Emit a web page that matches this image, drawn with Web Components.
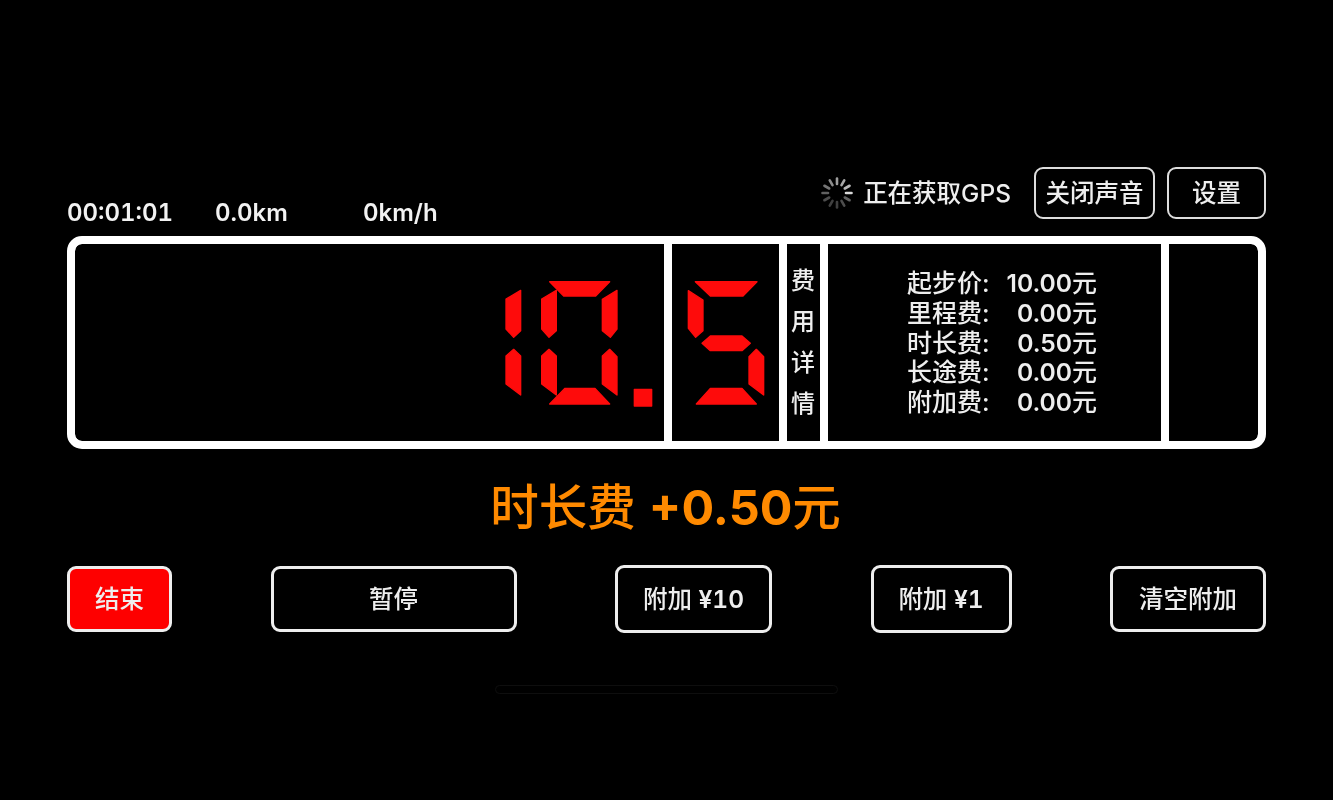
<!DOCTYPE html>
<html lang="zh">
<head>
<meta charset="utf-8">
<title>计价器</title>
<style>
  html, body { margin: 0; background: #000; }
  body { font-family: Inter, "Noto Sans CJK SC", sans-serif; color: #fff; }
</style>
</head>
<body>
<meter-app></meter-app>

<script>
class MeterButton extends HTMLElement {
  constructor() {
    super();
    this.attachShadow({ mode: 'open' });
    this.shadowRoot.innerHTML = `
      <style>
        :host {
          display: flex; align-items: center; justify-content: center;
          box-sizing: border-box; height: 66px; padding-bottom: 4px;
          border: 3px solid #eee; border-radius: 9px;
          font: 500 24.5px Inter, "Noto Sans CJK SC", sans-serif; color: #eee;
          font-variant-numeric: tabular-nums; white-space: pre;
          background: #000;
        }
        :host([danger]) { background: #fe0000; }
      </style>
      <slot></slot>`;
  }
}
customElements.define('meter-button', MeterButton);

class GpsStatus extends HTMLElement {
  constructor() {
    super();
    this.attachShadow({ mode: 'open' });
    // brightest spoke at three o'clock, fading clockwise round to four o'clock
    const shades = [0.62, 0.66, 0.72, 0.85, 0.38, 0.3, 0.25, 0.25, 0.3, 0.38, 0.46, 0.55];
    const spokes = shades.map((op, i) => `<line x1="16" y1="1.5" x2="16" y2="7" stroke="#fff" stroke-width="2.6"
        stroke-linecap="round" opacity="${op}" transform="rotate(${i * 30} 16 16)"/>`).join('');
    this.shadowRoot.innerHTML = `
      <style>
        :host { display: flex; align-items: center; gap: 10px; margin-right: 11px; padding-bottom: 4px;
          font: 500 24.5px Inter, "Noto Sans CJK SC", sans-serif; color: #eee; }
        svg { display: block; margin-top: 4px; }
      </style>
      <svg width="32" height="32" viewBox="0 0 32 32">${spokes}</svg>
      <slot></slot>`;
  }
}
customElements.define('gps-status', GpsStatus);

class TripStats extends HTMLElement {
  constructor() {
    super();
    this.attachShadow({ mode: 'open' });
    this.shadowRoot.innerHTML = `
      <style>
        :host {
          display: grid; grid-template-columns: 148px 148px auto;
          font: 600 24px Inter, "Noto Sans CJK SC", sans-serif; color: #f2f2f2;
          font-variant-numeric: tabular-nums;
          line-height: 26px; margin-bottom: -7px;
        }
      </style>
      <slot></slot>`;
  }
}
customElements.define('trip-stats', TripStats);

class SegDisplay extends HTMLElement {
  static get shapes() {
    return {
      // all points are in a 3x grid of the display area
      one: '93,91 93,212 72,232 49,207 49,117|49,288 72,268 93,288 93,405 49,372',
      zero: '200,91 200,212 178,232 156,207 156,117|156,288 178,268 200,288 200,405 156,372|'
        + '180,65 360,65 318,108 222,108|338,118 382,91 382,207 362,232 338,212|'
        + '338,288 360,268 382,290 382,405 338,372|180,432 360,432 316,385 226,385',
      dot: '434,388 486,388 486,438 434,438',
      five: '615,65 800,65 758,108 660,108|594,92 638,120 638,212 616,232 594,205|'
        + '635,250 660,228 755,228 780,250 755,272 660,272|776,290 798,268 820,290 820,405 776,372|'
        + '618,432 798,432 755,385 660,385'
    };
  }

  connectedCallback() {
    const root = this.shadowRoot || this.attachShadow({ mode: 'open' });
    const names = this.getAttribute('glyphs').split(' ');
    const [x, w] = this.getAttribute('span').split(' ').map(Number);
    const polys = names.map(n => SegDisplay.shapes[n]).join('|').split('|')
      .map(p => `<polygon points="${p}"/>`).join('');
    root.innerHTML = `
      <style>
        :host { display: block; margin-bottom: 5px; }
        svg { display: block; fill: #fe0b0b; stroke: #fe0b0b; stroke-width: 4; stroke-linejoin: round; overflow: visible; }
      </style>
      <svg width="${w / 3}" height="160" viewBox="${x} 0 ${w} 480">${polys}</svg>`;
  }
}
customElements.define('seg-display', SegDisplay);

class FeeDetail extends HTMLElement {
  set items(rows) {
    this.shadowRoot.querySelector('.grid').innerHTML = rows.map(([label, value]) => `
      <span class="label">${label}:</span><span class="value"><b>${value}</b>元</span>`).join('');
  }

  constructor() {
    super();
    this.attachShadow({ mode: 'open' });
    this.shadowRoot.innerHTML = `
      <style>
        :host { display: flex; align-items: center; justify-content: center; color: #eee; }
        .grid {
          display: grid; grid-template-columns: auto auto; column-gap: 17px;
          font: 500 25px/29.9px Inter, "Noto Sans CJK SC", sans-serif;
          margin: 2px 0 0 15px;
        }
        .value { text-align: right; }
        b { font-weight: 600; font-size: 24.6px; }
      </style>
      <div class="grid"></div>`;
  }
}
customElements.define('fee-detail', FeeDetail);

class FarePanel extends HTMLElement {
  constructor() {
    super();
    this.attachShadow({ mode: 'open' });
    this.shadowRoot.innerHTML = `
      <style>
        :host {
          display: grid; grid-template-columns: 589px 107px 33px 333px 89px; column-gap: 8px;
          box-sizing: border-box; height: 213px;
          border: 8px solid #fff; border-radius: 15px;
          background: #fff; overflow: hidden;
        }
        .cell { background: #000; display: flex; align-items: center; min-width: 0; }
        .int { justify-content: flex-end; padding-right: 11px; border-radius: 7px 0 0 7px; }
        .frac { justify-content: center; }
        .vlabel {
          flex-direction: column; justify-content: center; gap: 17px; padding-right: 1px; box-sizing: border-box;
          font: 500 24px/24px Inter, "Noto Sans CJK SC", sans-serif; color: #eee;
        }
        .detail { display: block; }
        .end { border-radius: 0 7px 7px 0; }
        ::slotted(fee-detail) { height: 100%; }
      </style>
      <div class="cell int"><slot name="int"></slot></div>
      <div class="cell frac"><slot name="frac"></slot></div>
      <div class="cell vlabel"><span>费</span><span>用</span><span>详</span><span>情</span></div>
      <div class="cell detail"><slot name="detail"></slot></div>
      <div class="cell end"></div>`;
  }
}
customElements.define('fare-panel', FarePanel);

class MeterApp extends HTMLElement {
  constructor() {
    super();
    this.attachShadow({ mode: 'open' });
    this.shadowRoot.innerHTML = `
      <style>
        :host {
          display: flex; flex-direction: column; box-sizing: border-box;
          width: 1333px; height: 800px; padding: 167px 67px 0; background: #000; overflow: hidden;
          filter: blur(0.3px);
        }
        .top { display: flex; justify-content: space-between; align-items: flex-end; height: 52px; margin-bottom: 17px; }
        .controls { display: flex; align-items: center; gap: 12px; }
        .controls meter-button { height: 52px; border-width: 2px; border-color: #ddd; }
        .sound { width: 121px; }
        .settings { width: 99px; }
        .message {
          height: 116px; display: flex; align-items: center; justify-content: center; box-sizing: border-box;
          padding: 0 2px 7px 0; white-space: pre;
          font: 500 48.5px Inter, "Noto Sans CJK SC", sans-serif; color: #ff8a00;
        }
        .message b { font-weight: 700; }
        .actions { display: flex; justify-content: space-between; align-items: center; height: 68px; }
        .actions b { font-weight: 600; }
        .end { width: 105px; }
        .pause { width: 246px; }
        .plus10 { width: 157px; height: 68px; }
        .plus1 { width: 141px; height: 68px; }
        .clear { width: 156px; }
        .home { align-self: center; width: 343px; height: 9px; margin-top: 52px; box-sizing: border-box;
          border: 1px solid #0e0e0e; border-radius: 5px; }
      </style>
      <div class="top">
        <trip-stats><span>00:01:01</span><span>0.0km</span><span>0km/h</span></trip-stats>
        <div class="controls">
          <gps-status>正在获取GPS</gps-status>
          <meter-button class="sound">关闭声音</meter-button>
          <meter-button class="settings">设置</meter-button>
        </div>
      </div>
      <fare-panel>
        <seg-display slot="int" glyphs="one zero dot" span="40 450"></seg-display>
        <seg-display slot="frac" glyphs="five" span="590 234"></seg-display>
        <fee-detail slot="detail"></fee-detail>
      </fare-panel>
      <div class="message"><span>时长费 <b>+0.50</b>元</span></div>
      <div class="actions">
        <meter-button class="end" danger>结束</meter-button>
        <meter-button class="pause">暂停</meter-button>
        <meter-button class="plus10"><span>附加 <b>¥10</b></span></meter-button>
        <meter-button class="plus1"><span>附加 <b>¥1</b></span></meter-button>
        <meter-button class="clear">清空附加</meter-button>
      </div>
      <div class="home"></div>`;
    this.shadowRoot.querySelector('fee-detail').items = [
      ['起步价', '10.00'], ['里程费', '0.00'], ['时长费', '0.50'], ['长途费', '0.00'], ['附加费', '0.00']
    ];
  }
}
customElements.define('meter-app', MeterApp);
</script>
</body>
</html>
